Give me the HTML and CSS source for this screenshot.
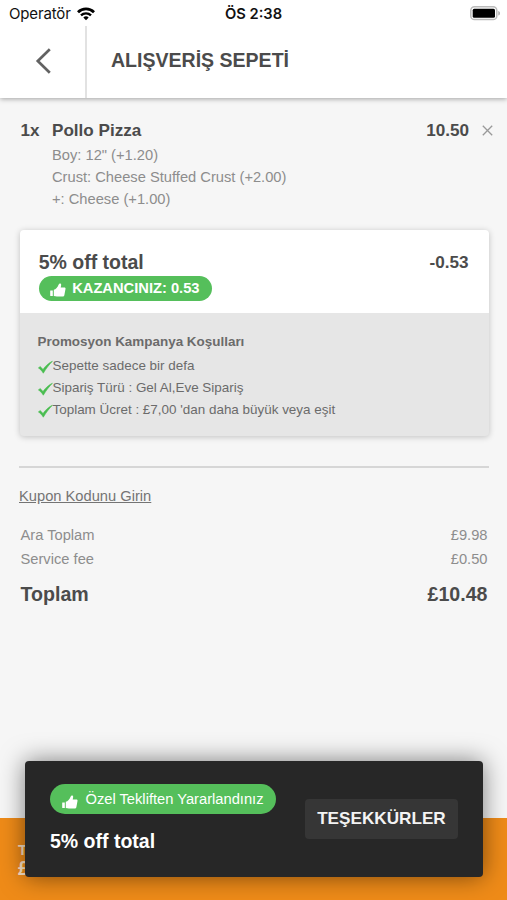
FILE: index.html
```html
<!DOCTYPE html>
<html lang="tr">
<head>
<meta charset="utf-8">
<title>Alışveriş Sepeti</title>
<link rel="stylesheet" href="styles.css">
</head>
<body>
<svg class="defs" aria-hidden="true">
  <symbol id="thumb" viewBox="0 0 16 14">
    <path d="M.5 7.500h2.300v5.500H.8a.6.6 0 0 1-.6-.6V7.800zM3.800 6.800C5.800 6.300 7.600 4.500 8.700 1.500 9.200.2 11.200.3 11.200 2L10.700 4.500H14.300C15.400 4.500 15.700 5.200 15.500 6.100L14.400 12C14.200 13.100 13.500 13.600 12.500 13.600H7L3.800 12.900z"/>
  </symbol>
  <symbol id="check" viewBox="0 0 15 14">
    <path d="M0.4 7.900 2.200 6.600 5 9.400C7.600 5.900 10.500 3.100 14.400 1.200 11 4.800 8.200 8.400 5.300 13.200 4.200 11 2.200 9.200.4 7.900z"/>
  </symbol>
</svg>
<div class="screen">
  <header class="header">
    <div class="status">
      <div class="carrier">Operatör
        <svg class="wifi" viewBox="0 0 18 14" fill="none" stroke="#000"><path d="M1 5.200A11.400 11.400 0 0 1 17 5.200" stroke-width="2.800"/><path d="M4 8.400A7.200 7.200 0 0 1 14 8.400" stroke-width="2.400"/><path d="M9 13.300 6.300 10.500A3.900 3.900 0 0 1 11.700 10.500z" fill="#000" stroke="none"/></svg>
      </div>
      <div class="time">ÖS 2:38</div>
      <svg class="battery" viewBox="0 0 31 15"><rect x=".8" y=".8" width="26" height="12.800" rx="3.700" fill="#fff" stroke="#bbb" stroke-width="1.500"/><rect x="2.700" y="2.700" width="22.300" height="9" rx="1.500"/><path d="M28.300 5c2.200.6 2.200 4 0 4.600z" fill="#aaa"/></svg>
    </div>
    <div class="titlebar">
      <div class="back"><svg viewBox="0 0 16 26"><path d="M14.800 1.200 2.800 13 14.800 24.800" fill="none" stroke="#626262" stroke-width="2.700"/></svg></div>
      <h1>ALIŞVERİŞ SEPETİ</h1>
    </div>
  </header>

  <main class="cart">
    <section class="item">
      <div class="qty">1x</div>
      <div class="detail">
        <div class="name">Pollo Pizza</div>
        <div>Boy: 12" (+1.20)</div>
        <div>Crust: Cheese Stuffed Crust (+2.00)</div>
        <div>+: Cheese (+1.00)</div>
      </div>
      <div class="price">10.50</div>
      <svg class="remove" viewBox="0 0 11 11"><path d="M.8.8 10.200 10.200M10.200.8.8 10.200" fill="none" stroke="#999" stroke-width="1.300"/></svg>
    </section>

    <section class="promo">
      <div class="offer">
        <div>
          <div class="offer-name">5% off total</div>
          <div class="pill saving"><svg class="thumb"><use href="#thumb"/></svg>KAZANCINIZ: 0.53</div>
        </div>
        <div class="discount">-0.53</div>
      </div>
      <div class="terms">
        <h2>Promosyon Kampanya Koşulları</h2>
        <div class="term"><svg><use href="#check"/></svg>Sepette sadece bir defa</div>
        <div class="term"><svg><use href="#check"/></svg>Sipariş Türü : Gel Al,Eve Sipariş</div>
        <div class="term"><svg><use href="#check"/></svg>Toplam Ücret : £7,00 'dan daha büyük veya eşit</div>
      </div>
    </section>

    <section class="summary">
      <a class="coupon">Kupon Kodunu Girin</a>
      <div class="row"><span>Ara Toplam</span><span>£9.98</span></div>
      <div class="row"><span>Service fee</span><span>£0.50</span></div>
      <div class="row total"><span>Toplam</span><span>£10.48</span></div>
    </section>
  </main>

  <footer class="footer"><div>T</div><div class="amount">£</div></footer>

  <div class="toast">
    <div>
      <div class="pill applied"><svg class="thumb"><use href="#thumb"/></svg>Özel Tekliften Yararlandınız</div>
      <div class="toast-name">5% off total</div>
    </div>
    <div class="button">TEŞEKKÜRLER</div>
  </div>
</div>
</body>
</html>
```
FILE: styles.css
```css
* { box-sizing: border-box; }
body { margin: 0; }
h1, h2 { margin: 0; }
.defs { position: absolute; width: 0; height: 0; }
.screen {
  position: relative;
  display: flex;
  flex-direction: column;
  width: 507px;
  height: 900px;
  overflow: hidden;
  background: #f6f6f6;
  color: #4b4b4b;
  font-family: "Liberation Sans", Arial, sans-serif;
  font-size: 14.7px;
  white-space: nowrap;
}
.header {
  height: 97.5px;
  background: #fff;
  box-shadow: 0 1px 5px rgba(0, 0, 0, .34);
}
.status {
  display: grid;
  grid-template-columns: 1fr auto 1fr;
  align-items: center;
  height: 26px;
  padding: 1px 6px 0 9px;
  color: #111;
  font: 15px/26px Inter, sans-serif;
}
.carrier { display: flex; align-items: center; gap: 6px; letter-spacing: -.15px; }
.wifi { width: 18px; height: 14px; margin-top: -1px; }
.time { margin-left: -3px; font-weight: 600; font-size: 14.7px; }
.battery { width: 31px; height: 15px; justify-self: end; margin-top: -1px; }
.titlebar { display: flex; height: 71.5px; }
.back {
  width: 87px;
  padding: 22px 0 0 35px;
  border-right: 2px solid #e2e2e2;
}
.back svg { display: block; width: 16px; height: 26px; }
h1 { padding-left: 24px; font-size: 19.55px; line-height: 68px; }

.cart { flex: 1; padding: 22.5px 18.5px 0 20px; }
.item { display: flex; height: 110px; line-height: 22px; color: #8d8d8d; }
.qty, .name, .price, .discount { color: #4b4b4b; font-size: 17.1px; font-weight: bold; }
.qty { width: 32px; padding-left: .5px; }
.name { height: 24px; }
.detail { flex: 1; }
.qty, .name, .price { line-height: 22px; }
.remove { width: 11px; height: 11px; margin: 5px -4.500px 0 13px; }

.promo {
  height: 206px;
  margin: 0 0 0 -.5px;
  border-radius: 4px;
  overflow: hidden;
  background: #e6e6e6;
  box-shadow: 0 1px 6px rgba(0, 0, 0, .22);
}
.offer {
  display: flex;
  justify-content: space-between;
  height: 83px;
  padding: 20px 20px 0 19.2px;
  background: #fff;
}
.offer-name { font-size: 19.5px; font-weight: bold; line-height: 24px; height: 26px; }
.discount { line-height: 26px; }
.pill { display: flex; align-items: center; width: max-content; color: #fff; background: #55bf5b; }
.thumb { width: 16px; height: 14px; fill: #fff; }
.saving { height: 24.5px; border-radius: 13px; padding: 0 12px 0 11.5px; font-weight: bold; }
.saving .thumb { margin: 4px 6px 0 0; }
.terms { padding: 17.5px 18px; font-size: 13.45px; color: #6b6b6b; }
h2 { height: 24px; font-size: 13.45px; line-height: 22px; }
.term { display: flex; height: 22px; line-height: 22px; }
.term svg { width: 15px; height: 14px; margin-top: 5px; fill: #49bd50; stroke: #49bd50; stroke-width: .6; }

.summary { margin-top: 30px; padding-top: 17px; border-top: 2px solid #d6d6d6; margin-left: -1px; }
.coupon { display: block; height: 37.5px; line-height: 22px; color: #747474; text-decoration: underline; text-underline-offset: 1px; }
.row { display: flex; justify-content: space-between; height: 24.5px; padding: 0 1px 0 1.5px; line-height: 24.5px; color: #8d8d8d; }
.total { margin-top: 10.5px; font-size: 19.6px; font-weight: bold; color: #4b4b4b; }

.footer { height: 82px; padding: 24px 18px; background: #ef8b18; color: #fbe3c5; font-size: 14.7px; font-weight: bold; line-height: 17px; }
.amount { font-size: 19.5px; line-height: 19px; }
.toast {
  position: absolute;
  left: 25px;
  top: 761px;
  display: flex;
  justify-content: space-between;
  align-items: center;
  width: 457.5px;
  height: 115.5px;
  padding: 0 24.5px 0 25px;
  border-radius: 4px;
  background: #272727;
  color: #fff;
  box-shadow: 0 0 24px rgba(0, 0, 0, .5);
}
.applied { height: 29.5px; border-radius: 15px; padding: 0 12.5px 0 11.5px; }
.applied .thumb { margin: 5px 8px 0 0; }
.toast-name { margin-top: 15.5px; font-size: 19.5px; font-weight: bold; line-height: 24px; }
.button {
  padding: 0 12.3px;
  border-radius: 4px;
  background: #363636;
  color: #f3f3f3;
  font-size: 17.15px;
  font-weight: bold;
  line-height: 39.5px;
}
```
